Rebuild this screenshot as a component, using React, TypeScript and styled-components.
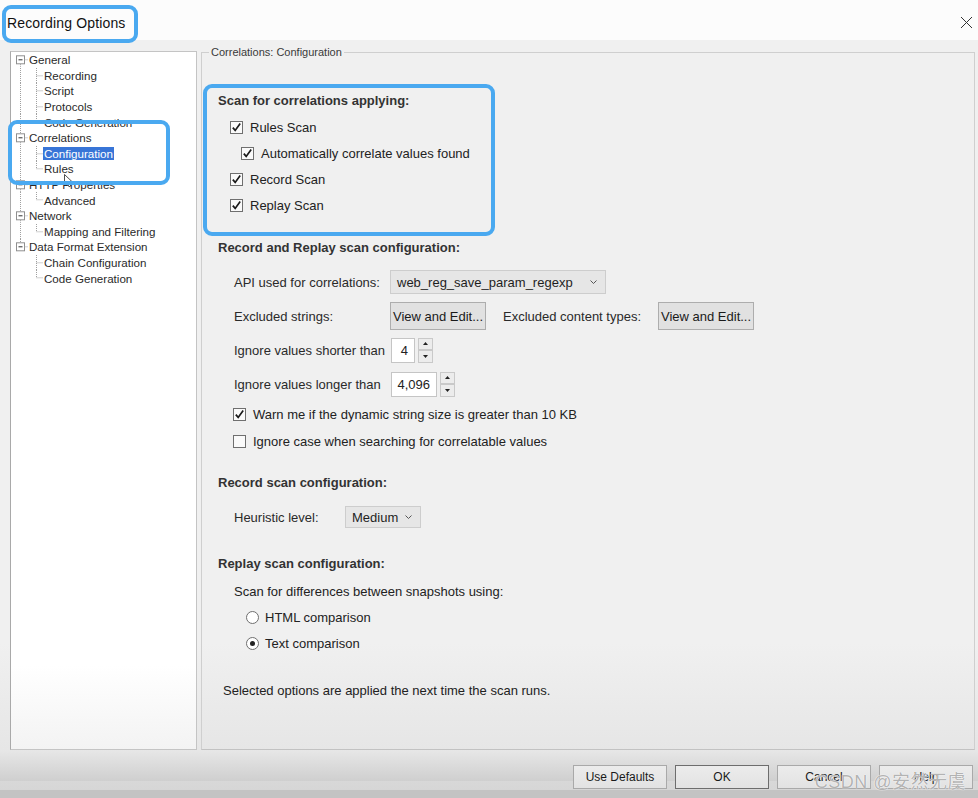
import React from "react";
import styled, { createGlobalStyle } from "styled-components";

/* Global */
const GlobalStyle = createGlobalStyle`
	body {
		margin: 0;
		background: #f0f0f0;
		font-family: "Liberation Sans", Arial, sans-serif;
	}
`;

const accent = "#4aa9f0";

/* Window */
const Window = styled.div`
	position: relative;
	width: 978px;
	height: 798px;
	overflow: hidden;
	display: flex;
	flex-direction: column;
	background: #f0f0f0;
	color: #222;
`;

const TitleBar = styled.div`
	height: 40px;
	flex-shrink: 0;
	display: flex;
	align-items: center;
	justify-content: space-between;
	padding: 5px 5px 0 7px;
	box-sizing: border-box;
	background: #fcfcfc;
`;

const Title = styled.div`
	font-size: 14px;
	letter-spacing: 0.15px;
	color: #111;
`;

const Main = styled.div`
	flex: 1;
	display: flex;
	gap: 4px;
	padding: 11px 3px 0 10px;
	background: linear-gradient(#f0f0f0 85%, #e6e6e6);
`;

/* Tree */
const TreePanel = styled.div`
	position: relative;
	width: 187px;
	box-sizing: border-box;
	border: 1px solid #c4c4c4;
	border-left-color: #a9a9a9;
	background: linear-gradient(#ffffff 88%, #f3f3f3);
`;

const TreeRow = styled.div`
	display: flex;
	align-items: center;
	height: 15.6px;
`;

const TreeLabel = styled.span<{ $selected?: boolean }>`
	font-size: 11.6px;
	line-height: 13px;
	padding: 0 1px;
	color: ${(p) => (p.$selected ? "#fff" : "#2a2a2a")};
	background: ${(p) => (p.$selected ? "#3875d7" : "transparent")};
	white-space: nowrap;
`;

const Cursor = styled.svg`
	position: absolute;
	left: 53px;
	top: 122px;
`;

/* Group box */
const GroupBox = styled.fieldset`
	flex: 1;
	margin: -5px 0 0 0;
	padding: 0;
	min-width: 0;
	border: 1px solid #cfcfcf;
	border-bottom-color: #c2c2c2;
`;

const Legend = styled.legend`
	margin-left: 7px;
	padding: 0 2px;
	font-size: 11px;
	line-height: 13px;
	color: #3a3a3a;
`;

const Content = styled.div`
	padding: 34px 0 0 16px;
	display: flex;
	flex-direction: column;
`;

const Heading = styled.div<{ $mt?: number }>`
	margin-top: ${(p) => p.$mt ?? 0}px;
	font-size: 13px;
	line-height: 16px;
	font-weight: bold;
	color: #333;
`;

const Row = styled.div<{ $mt?: number; $h?: number; $indent?: number }>`
	display: flex;
	align-items: center;
	margin-top: ${(p) => p.$mt ?? 0}px;
	height: ${(p) => p.$h ?? 26}px;
	padding-left: ${(p) => p.$indent ?? 16}px;
	font-size: 13px;
	color: #222;
	white-space: nowrap;
`;

const FieldLabel = styled.span<{ $w?: number }>`
	width: ${(p) => (p.$w ? `${p.$w}px` : "auto")};
	flex-shrink: 0;
	color: #2a2a2a;
`;

const Box = styled.span`
	width: 13px;
	height: 13px;
	flex-shrink: 0;
	margin-right: 7px;
	box-sizing: border-box;
	border: 1px solid #6f6f6f;
	background: #fafafa;
	display: flex;
	align-items: center;
	justify-content: center;
`;

const Radio = styled.span<{ $checked?: boolean }>`
	width: 13px;
	height: 13px;
	flex-shrink: 0;
	margin-right: 6px;
	box-sizing: border-box;
	border: 1px solid #6f6f6f;
	border-radius: 50%;
	background: #fff;
	display: flex;
	align-items: center;
	justify-content: center;
	&::after {
		content: "";
		width: 5px;
		height: 5px;
		border-radius: 50%;
		background: ${(p) => (p.$checked ? "#222" : "transparent")};
	}
`;

const Combo = styled.div<{ $w: number; $h: number }>`
	width: ${(p) => p.$w}px;
	height: ${(p) => p.$h}px;
	box-sizing: border-box;
	display: flex;
	align-items: center;
	justify-content: space-between;
	padding: 0 8px 0 6px;
	background: #e6e6e6;
	border: 1px solid #cdcdcd;
	color: #1e1e1e;
`;

const PushButton = styled.button`
	height: 28px;
	width: 96px;
	padding: 0;
	font-family: inherit;
	font-size: 13px;
	color: #1a1a1a;
	background: #e1e1e1;
	border: 1px solid #adadad;
	flex-shrink: 0;
`;

const Spin = styled.div`
	display: flex;
	align-items: center;
	gap: 3px;
	height: 25px;
`;

const SpinInput = styled.div<{ $w: number }>`
	width: ${(p) => p.$w}px;
	height: 25px;
	box-sizing: border-box;
	border: 1px solid #c5c5c5;
	background: #fff;
	display: flex;
	align-items: center;
	justify-content: flex-end;
	padding-right: 6px;
	font-size: 13px;
`;

const SpinArrows = styled.div`
	display: flex;
	flex-direction: column;
	width: 15px;
	height: 25px;
`;

const SpinArrow = styled.div`
	flex: 1;
	box-sizing: border-box;
	border: 1px solid #c9c9c9;
	background: #ececec;
	display: flex;
	align-items: center;
	justify-content: center;
`;

const Note = styled.div<{ $mt: number }>`
	margin-top: ${(p) => p.$mt}px;
	padding-left: 5px;
	font-size: 13px;
	line-height: 16px;
	color: #222;
`;

/* Footer */
const Footer = styled.div`
	position: relative;
	height: 48px;
	flex-shrink: 0;
	display: flex;
	justify-content: flex-end;
	align-items: flex-start;
	gap: 8px;
	padding: 15px 5px 0 0;
	box-sizing: border-box;
	background: linear-gradient(#e7e7e7 0px, #cfcfcf 31px, #d8d8d8 31px, #d6d6d6 40px, #c3c3c3 40px);
`;

const DialogButton = styled.button<{ $default?: boolean }>`
	width: 94px;
	height: 24px;
	padding: 0;
	font-family: inherit;
	font-size: 12px;
	color: #1a1a1a;
	background: linear-gradient(#ececec, #e2e2e2);
	border: 1px solid ${(p) => (p.$default ? "#6d6d6d" : "#a9a9a9")};
`;

const Watermark = styled.div`
	position: absolute;
	right: 12px;
	top: 17px;
	font-family: "Liberation Sans", "Noto Sans CJK SC", sans-serif;
	font-size: 18px;
	letter-spacing: 0.5px;
	color: rgba(165, 165, 165, 0.85);
	text-shadow: 0 0 1px #fff, 0 0 1px #fff;
	pointer-events: none;
`;

/* Annotations */
const Highlight = styled.div<{ $x: number; $y: number; $w: number; $h: number }>`
	position: absolute;
	left: ${(p) => p.$x}px;
	top: ${(p) => p.$y}px;
	width: ${(p) => p.$w}px;
	height: ${(p) => p.$h}px;
	box-sizing: border-box;
	border: 4px solid ${accent};
	border-radius: 9px;
	pointer-events: none;
`;

/* Pieces */
const dot = { stroke: "#a0a0a0", strokeDasharray: "1 1", strokeWidth: 1 };

function TopGutter({ first, last }: { first: boolean; last: boolean }) {
	return (
		<svg width="17" height="15.6" style={{ flexShrink: 0 }}>
			{!first && <line x1="9.5" y1="0" x2="9.5" y2="3.8" {...dot} />}
			{!last && <line x1="9.5" y1="11.8" x2="9.5" y2="15.6" {...dot} />}
			<rect x="5.5" y="3.8" width="8" height="8" fill="#fff" stroke="#8f8f8f" />
			<line x1="7.5" y1="7.8" x2="11.5" y2="7.8" stroke="#333" />
			<line x1="13.5" y1="7.8" x2="17" y2="7.8" {...dot} />
		</svg>
	);
}

function ChildGutter({ parentLast, lastChild }: { parentLast: boolean; lastChild: boolean }) {
	return (
		<svg width="32" height="15.6" style={{ flexShrink: 0 }}>
			{!parentLast && <line x1="9.5" y1="0" x2="9.5" y2="15.6" {...dot} />}
			<line x1="25.5" y1="0" x2="25.5" y2={lastChild ? 7.8 : 15.6} {...dot} />
			<line x1="25.5" y1="7.8" x2="32" y2="7.8" {...dot} />
		</svg>
	);
}

function Check() {
	return (
		<Box>
			<svg width="11" height="11" viewBox="0 0 11 11">
				<path d="M1.8 5.6 L4.2 8.4 L9.2 1.6" fill="none" stroke="#1a1a1a" strokeWidth="1.7" />
			</svg>
		</Box>
	);
}

function Chevron() {
	return (
		<svg width="7" height="4" viewBox="0 0 7 4">
			<path d="M0.5 0.5 L3.5 3.5 L6.5 0.5" fill="none" stroke="#555" strokeWidth="1" />
		</svg>
	);
}

function SpinBox({ value, width }: { value: string; width: number }) {
	return (
		<Spin>
			<SpinInput $w={width}>{value}</SpinInput>
			<SpinArrows>
				<SpinArrow>
					<svg width="5" height="3"><path d="M0 3 L2.5 0 L5 3 Z" fill="#222" /></svg>
				</SpinArrow>
				<SpinArrow>
					<svg width="5" height="3"><path d="M0 0 L2.5 3 L5 0 Z" fill="#222" /></svg>
				</SpinArrow>
			</SpinArrows>
		</Spin>
	);
}

const tree = [
	{ label: "General", children: ["Recording", "Script", "Protocols", "Code Generation"] },
	{ label: "Correlations", children: ["Configuration", "Rules"] },
	{ label: "HTTP Properties", children: ["Advanced"] },
	{ label: "Network", children: ["Mapping and Filtering"] },
	{ label: "Data Format Extension", children: ["Chain Configuration", "Code Generation"] },
];

export default function App() {
	return (
		<Window>
			<GlobalStyle />
			<TitleBar>
				<Title>Recording Options</Title>
				<svg width="13" height="13" viewBox="0 0 13 13">
					<path d="M1 1 L12 12 M12 1 L1 12" stroke="#333" strokeWidth="1" />
				</svg>
			</TitleBar>

			<Main>
				<TreePanel>
					{tree.map((node, i) => (
						<React.Fragment key={node.label}>
							<TreeRow>
								<TopGutter first={i === 0} last={i === tree.length - 1} />
								<TreeLabel>{node.label}</TreeLabel>
							</TreeRow>
							{node.children.map((child, j) => (
								<TreeRow key={child + j}>
									<ChildGutter parentLast={i === tree.length - 1} lastChild={j === node.children.length - 1} />
									<TreeLabel $selected={child === "Configuration"}>{child}</TreeLabel>
								</TreeRow>
							))}
						</React.Fragment>
					))}
					<Cursor width="10" height="14" viewBox="0 0 10 14">
						<path d="M0.5 0.5 L0.5 11 L3 8.6 L5 12.8 L6.8 12 L4.8 7.8 L8.2 7.8 Z" fill="#fff" stroke="#222" strokeWidth="0.8" />
					</Cursor>
				</TreePanel>

				<GroupBox>
					<Legend>Correlations: Configuration</Legend>
					<Content>
						<Heading>Scan for correlations applying:</Heading>
						<Row $mt={5} $indent={12}><Check />Rules Scan</Row>
						<Row $indent={23}><Check />Automatically correlate values found</Row>
						<Row $indent={12}><Check />Record Scan</Row>
						<Row $indent={12}><Check />Replay Scan</Row>

						<Heading $mt={22}>Record and Replay scan configuration:</Heading>
						<Row $mt={14} $h={24}>
							<FieldLabel $w={156}>API used for correlations:</FieldLabel>
							<Combo $w={216} $h={24}>
								<span>web_reg_save_param_regexp</span>
								<Chevron />
							</Combo>
						</Row>
						<Row $mt={8} $h={28}>
							<FieldLabel $w={156}>Excluded strings:</FieldLabel>
							<PushButton>View and Edit...</PushButton>
							<FieldLabel style={{ margin: "0 17px" }}>Excluded content types:</FieldLabel>
							<PushButton>View and Edit...</PushButton>
						</Row>
						<Row $mt={7}>
							<FieldLabel $w={157}>Ignore values shorter than</FieldLabel>
							<SpinBox value="4" width={24} />
						</Row>
						<Row $mt={8}>
							<FieldLabel $w={157}>Ignore values longer than</FieldLabel>
							<SpinBox value="4,096" width={46} />
						</Row>
						<Row $mt={4} $indent={15}><Check />Warn me if the dynamic string size is greater than 10 KB</Row>
						<Row $mt={1} $indent={15}><Box />Ignore case when searching for correlatable values</Row>

						<Heading $mt={21}>Record scan configuration:</Heading>
						<Row $mt={14} $h={24}>
							<FieldLabel $w={111}>Heuristic level:</FieldLabel>
							<Combo $w={76} $h={22}>
								<span>Medium</span>
								<Chevron />
							</Combo>
						</Row>

						<Heading $mt={27}>Replay scan configuration:</Heading>
						<Row $mt={11} $h={16}>Scan for differences between snapshots using:</Row>
						<Row $mt={5} $indent={28}><Radio />HTML comparison</Row>
						<Row $indent={28}><Radio $checked />Text comparison</Row>

						<Note $mt={27}>Selected options are applied the next time the scan runs.</Note>
					</Content>
				</GroupBox>
			</Main>

			<Footer>
				<DialogButton>Use Defaults</DialogButton>
				<DialogButton $default>OK</DialogButton>
				<DialogButton>Cancel</DialogButton>
				<DialogButton>Help</DialogButton>
				<Watermark>CSDN @安然无虞</Watermark>
			</Footer>

			<Highlight $x={2} $y={5} $w={136} $h={38} />
			<Highlight $x={8} $y={120} $w={162} $h={65} />
			<Highlight $x={203} $y={84} $w={292} $h={152} />
		</Window>
	);
}
